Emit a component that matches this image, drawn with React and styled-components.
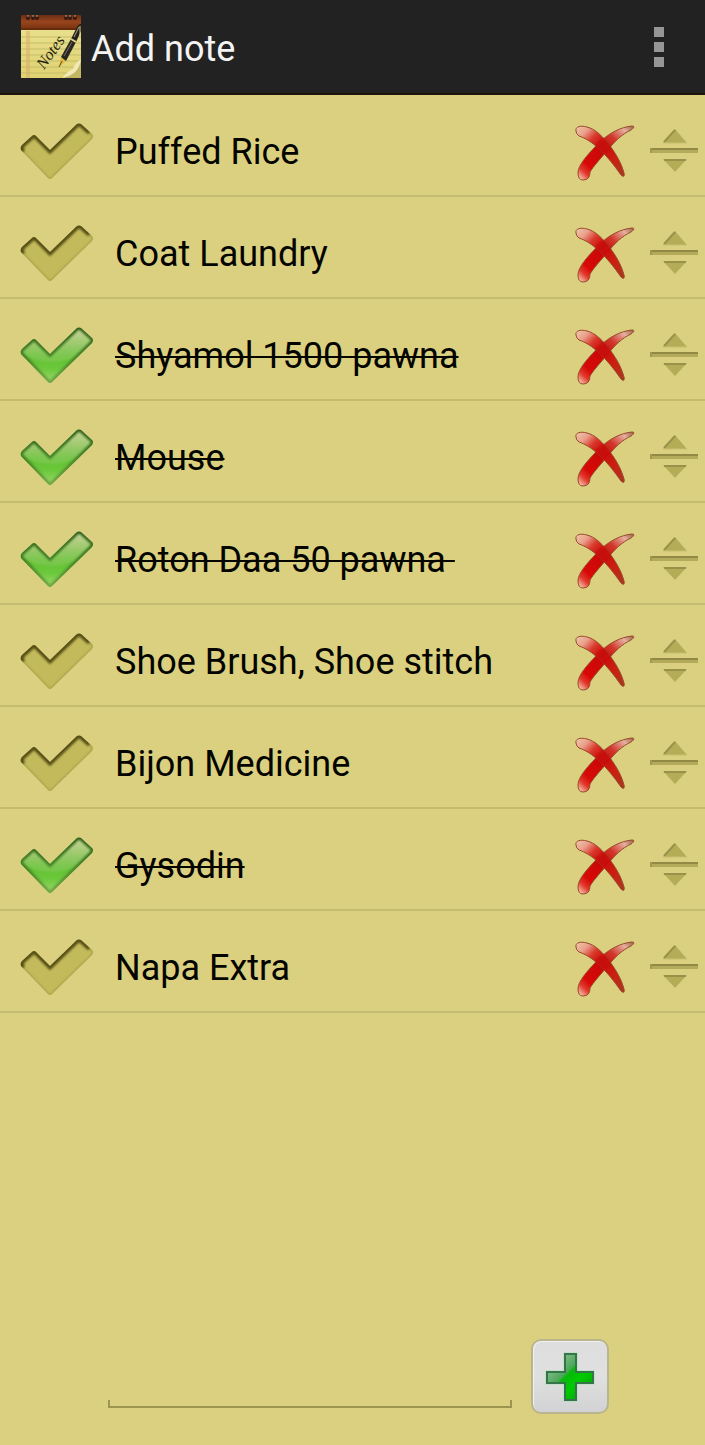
import React, { useState } from "react";
import styled, { createGlobalStyle } from "styled-components";

const GlobalStyle = createGlobalStyle`
  *, *::before, *::after { box-sizing: border-box; }
  body {
    margin: 0;
    background: #dbd080;
    font-family: Roboto, "Liberation Sans", sans-serif;
    font-size: 36px;
    line-height: 44px;
    color: #050500;
  }
  button { font: inherit; padding: 0; border: 0; background: none; cursor: pointer; }
  svg { display: block; }
`;

const Page = styled.div`
  display: flex;
  flex-direction: column;
  min-height: 100vh;
`;

const Header = styled.header`
  display: flex;
  align-items: center;
  height: 95px;
  padding: 0 24px 0 20px;
  background: #222222;
  border-bottom: 2px solid #1c170c;
`;

const Title = styled.h1`
  flex: 1;
  margin: 4px 0 0 9px;
  font-size: 36px;
  font-weight: 400;
  color: #f3f3f3;
`;

const MenuButton = styled.button`
  display: grid;
  justify-items: center;
  gap: 5px;
  width: 44px;
`;

const MenuDot = styled.span`
  width: 10px;
  height: 10px;
  background: #969696;
`;

const List = styled.ul`
  flex: 1;
  margin: 0;
  padding: 0;
  list-style: none;
`;

const Row = styled.li`
  display: flex;
  align-items: center;
  height: 102px;
  padding: 14px 6px 0 18px;
  border-bottom: 2px solid #c5bb6f;
`;

const ItemLabel = styled.label`
  display: flex;
  flex: 1;
  align-items: center;
  gap: 19px;
  min-width: 0;
  cursor: pointer;
`;

const Tick = styled.input`
  position: absolute;
  width: 1px;
  height: 1px;
  margin: 0;
  opacity: 0;
`;

const ItemText = styled.span`
  white-space: pre;
  text-decoration-line: ${(p) => (p.$done ? "line-through" : "none")};
  text-decoration-thickness: 2px;
`;

const Actions = styled.div`
  display: flex;
  align-items: center;
  gap: 14px;
`;

const Footer = styled.form`
  display: flex;
  align-items: flex-end;
  gap: 19px;
  padding: 0 96px 31px 108px;
`;

const Field = styled.div`
  position: relative;
  flex: 1;
  min-width: 0;
  margin-bottom: 6px;
  border-bottom: 2px solid #9d944f;

  &::before, &::after {
    content: "";
    position: absolute;
    bottom: 0;
    width: 2px;
    height: 6px;
    background: #9d944f;
  }
  &::before { left: 0; }
  &::after { right: 0; }
`;

const NoteInput = styled.input`
  display: block;
  width: 100%;
  height: 60px;
  padding: 0 12px;
  border: 0;
  outline: 0;
  background: transparent;
  font: inherit;
  color: inherit;
`;

const AddButton = styled.button`
  display: grid;
  place-items: center;
  width: 78px;
  height: 75px;
  && {
    border: 2px solid #b9b58c;
    border-radius: 10px;
    background: linear-gradient(#dddddd, #e0e0e0 50%, #d2d2d4);
    box-shadow: inset 1px 1px 1px #f2f2f2;
  }
`;

const CHECK = "M1 27Q0 24 2 22L12 13Q14 11 16 13L30 27L57 1Q59 0 61 1L72 11Q74 13 72 16L32 55Q30 57 28 55Z";

function SharedPaint() {
  return (
    <svg width="0" height="0" style={{ position: "absolute" }} aria-hidden="true">
      <defs>
        <linearGradient id="green" x1="0" y1="0" x2="0" y2="1">
          <stop offset="0" stopColor="#7fa84a" />
          <stop offset="0.5" stopColor="#5fbe30" />
          <stop offset="0.75" stopColor="#6cc93c" />
          <stop offset="1" stopColor="#a0d86e" />
        </linearGradient>
        <linearGradient id="gloss" x1="0" y1="0" x2="0" y2="1">
          <stop offset="0" stopColor="#d8dba8" stopOpacity="0.9" />
          <stop offset="1" stopColor="#8fce66" stopOpacity="0.4" />
        </linearGradient>
        <linearGradient id="greenEdge" x1="0" y1="0" x2="0" y2="1">
          <stop offset="0" stopColor="#326019" />
          <stop offset="0.6" stopColor="#4a862a" />
          <stop offset="1" stopColor="#73a646" />
        </linearGradient>
        <linearGradient id="redA" gradientUnits="userSpaceOnUse" x1="1" y1="3" x2="49" y2="50">
          <stop offset="0" stopColor="#ecc4a4" />
          <stop offset="0.14" stopColor="#eaa08c" />
          <stop offset="0.28" stopColor="#d93a2c" />
          <stop offset="0.45" stopColor="#c80a08" />
          <stop offset="0.75" stopColor="#cc2012" />
          <stop offset="1" stopColor="#a8381c" />
        </linearGradient>
        <linearGradient id="redB" gradientUnits="userSpaceOnUse" x1="58" y1="1" x2="7" y2="55">
          <stop offset="0" stopColor="#9c6242" />
          <stop offset="0.12" stopColor="#e6b0a0" />
          <stop offset="0.3" stopColor="#d2382c" />
          <stop offset="0.5" stopColor="#c80a08" />
          <stop offset="0.8" stopColor="#d80906" />
          <stop offset="0.9" stopColor="#e2382e" />
          <stop offset="1" stopColor="#f4b8a0" />
        </linearGradient>
        <clipPath id="checkClip"><path d={CHECK} /></clipPath>
        <filter id="soft" x="-20%" y="-20%" width="140%" height="140%">
          <feGaussianBlur stdDeviation="1" />
        </filter>
      </defs>
    </svg>
  );
}

function CheckIcon({ done }) {
  return (
    <svg width="78" height="60" viewBox="-2 -1 78 60" aria-hidden="true">
      {done ? (
        <g>
          <path d={CHECK} fill="url(#green)" />
          <g clipPath="url(#checkClip)">
            <path d="M0 26V8H22L30 28L56 0H78V12Q62 33 34 35Q14 35 0 26Z" fill="url(#gloss)" filter="url(#soft)" />
            <path d={CHECK} fill="none" stroke="url(#greenEdge)" strokeWidth="5" filter="url(#soft)" />
          </g>
        </g>
      ) : (
        <g>
          <path d={CHECK} fill="#c3ba5c" />
          <g clipPath="url(#checkClip)">
            <path d={CHECK} fill="none" stroke="#a89d49" strokeWidth="2" filter="url(#soft)" />
            <path d="M3 29Q-1 25 2 22L12 13Q14 11 16 13L30 27L57 1Q59 0 61 1L70 9" fill="none" stroke="#574f14" strokeWidth="6" filter="url(#soft)" />
          </g>
        </g>
      )}
    </svg>
  );
}

function CrossIcon() {
  return (
    <svg width="62" height="60" viewBox="-2 -3 62 60" aria-hidden="true">
      <path d="M57 1C60 1 59 3 56 5C47 9 39 17 33 25C24 35 18 42 15 47Q15 55 8 55Q3 55 3 48C3 43 7 37 11 32C15 27 20 22 25 17C34 8 46 2 57 1Z" fill="url(#redB)" stroke="#984a2c" strokeWidth="1" />
      <path d="M1 6C0 2 5 0 12 2C20 4 26 10 32 17C40 27 46 37 49 48C50 52 48 52 46 50C39 40 32 31 24 24C17 17 10 13 4 11Q1 9 1 6Z" fill="url(#redA)" stroke="#984a2c" strokeWidth="1" />
      <path d="M21 20L28 14L35 21L27 29Z" fill="#c80a08" filter="url(#soft)" />
    </svg>
  );
}

function HandleIcon() {
  return (
    <svg width="50" height="46" viewBox="-1 0 50 46" aria-hidden="true">
      <path d="M25 0L37 14H13Z" fill="#b5ac58" />
      <path d="M25 1L14 13" stroke="#99904a" strokeWidth="2" />
      <path d="M13 14H37" stroke="#c9c06f" strokeWidth="1" />
      <path d="M0 19H48V24H0Z" fill="#b3aa5a" />
      <path d="M0 20H48" stroke="#928945" strokeWidth="2" />
      <path d="M1 19V24" stroke="#a1984c" strokeWidth="2" />
      <path d="M13 30H37L25 43Z" fill="#b5ac58" />
      <path d="M14 31H36" stroke="#99904a" strokeWidth="2" />
    </svg>
  );
}

function PlusIcon() {
  return (
    <svg width="50" height="50" viewBox="0 0 50 50" aria-hidden="true">
      <defs>
        <linearGradient id="plus" x1="0.1" y1="0.1" x2="0.8" y2="0.8">
          <stop offset="0.2" stopColor="#78b580" />
          <stop offset="0.44" stopColor="#4ba858" />
          <stop offset="0.5" stopColor="#06b80a" />
          <stop offset="0.75" stopColor="#00cb00" />
          <stop offset="1" stopColor="#04ae08" />
        </linearGradient>
      </defs>
      <path d="M20 2H31V20H48V31H31V48H20V31H2V20H20Z" fill="url(#plus)" stroke="#a9dfaf" strokeWidth="3" />
      <path d="M20 2H31V20H48V31H31V48H20V31H2V20H20Z" fill="url(#plus)" stroke="#35754a" strokeWidth="2" />
    </svg>
  );
}

function NotesLogo() {
  return (
    <svg width="62" height="66" viewBox="0 0 62 66" role="img" aria-label="Notes">
      <defs>
        <linearGradient id="leather" x1="0" y1="0" x2="0" y2="1">
          <stop offset="0" stopColor="#6b2d13" />
          <stop offset="0.45" stopColor="#98451d" />
          <stop offset="1" stopColor="#74300e" />
        </linearGradient>
        <linearGradient id="paper" x1="0" y1="0" x2="0" y2="1">
          <stop offset="0" stopColor="#e9df8c" />
          <stop offset="1" stopColor="#dfd272" />
        </linearGradient>
      </defs>
      <path d="M1 16H61V64H1Z" fill="url(#paper)" />
      <path d="M1 23H61M1 29H61M1 35H61M1 41H61M1 47H61M1 53H61M1 59H58" stroke="#c5bc6c" strokeWidth="1" />
      <path d="M7 17V64M9 17V64" stroke="#d9a868" strokeWidth="1" />
      <path d="M61 43C60 53 53 61 40 64H61Z" fill="#c2b663" />
      <path d="M61 45C56 48 54 52 53 55C49 56 45 61 42 64C53 62 60 56 61 45Z" fill="#f0e9b6" />
      <path d="M1 2Q1 1 2 1H60Q61 1 61 2V16H1Z" fill="url(#leather)" />
      <path d="M1 15H61" stroke="#542208" strokeWidth="1" />
      <g fill="#38190f">
        <circle cx="8" cy="4" r="2" /><circle cx="13" cy="4" r="2" /><circle cx="17" cy="4" r="2" />
        <circle cx="46" cy="4" r="2" /><circle cx="50" cy="4" r="2" /><circle cx="55" cy="4" r="2" />
      </g>
      <path d="M7 2H9M12 2H14M16 2H18M45 2H47M49 2H51M54 2H56" stroke="#a8a29a" strokeWidth="1" />
      <text x="24" y="56" transform="rotate(-54 24 56)" fontFamily="'Liberation Serif', serif" fontStyle="italic" fontSize="16" fill="#231e0d">Notes</text>
      <path d="M39 53L41 43L46 47Z" fill="#dfba45" />
      <path d="M39 53L42 47" stroke="#695116" strokeWidth="1" />
      <path d="M41 43L51 25L56 28L46 47Z" fill="#29271f" />
      <path d="M44 42L52 28" stroke="#77746b" strokeWidth="1" />
      <path d="M51 25L57 13Q60 8 62 11L61 17L56 28Z" fill="#24221c" />
      <path d="M51 25L56 28" stroke="#e4d38d" strokeWidth="2" />
      <path d="M54 23L59 13" stroke="#aaa68f" strokeWidth="1" />
      <path d="M60 12V24" stroke="#ddc776" strokeWidth="1" />
    </svg>
  );
}

const INITIAL_ITEMS = [
  { id: 1, text: "Puffed Rice", done: false },
  { id: 2, text: "Coat Laundry", done: false },
  { id: 3, text: "Shyamol 1500 pawna", done: true },
  { id: 4, text: "Mouse", done: true },
  { id: 5, text: "Roton Daa 50 pawna ", done: true },
  { id: 6, text: "Shoe Brush, Shoe stitch", done: false },
  { id: 7, text: "Bijon Medicine", done: false },
  { id: 8, text: "Gysodin", done: true },
  { id: 9, text: "Napa Extra", done: false },
];

export default function App() {
  const [items, setItems] = useState(INITIAL_ITEMS);
  const [draft, setDraft] = useState("");

  const toggle = (id) =>
    setItems(items.map((item) => (item.id === id ? { ...item, done: !item.done } : item)));
  const remove = (id) => setItems(items.filter((item) => item.id !== id));
  const add = (event) => {
    event.preventDefault();
    if (!draft.trim()) return;
    setItems([...items, { id: Date.now(), text: draft, done: false }]);
    setDraft("");
  };

  return (
    <Page>
      <GlobalStyle />
      <SharedPaint />
      <Header>
        <NotesLogo />
        <Title>Add note</Title>
        <MenuButton type="button" aria-label="More options">
          <MenuDot />
          <MenuDot />
          <MenuDot />
        </MenuButton>
      </Header>
      <List>
        {items.map((item) => (
          <Row key={item.id}>
            <ItemLabel>
              <Tick type="checkbox" checked={item.done} onChange={() => toggle(item.id)} />
              <CheckIcon done={item.done} />
              <ItemText $done={item.done}>{item.text}</ItemText>
            </ItemLabel>
            <Actions>
              <button type="button" aria-label={`Delete ${item.text}`} onClick={() => remove(item.id)}>
                <CrossIcon />
              </button>
              <button type="button" aria-label={`Move ${item.text}`}>
                <HandleIcon />
              </button>
            </Actions>
          </Row>
        ))}
      </List>
      <Footer onSubmit={add}>
        <Field>
          <NoteInput aria-label="New item" value={draft} onChange={(e) => setDraft(e.target.value)} />
        </Field>
        <AddButton type="submit" aria-label="Add item">
          <PlusIcon />
        </AddButton>
      </Footer>
    </Page>
  );
}
